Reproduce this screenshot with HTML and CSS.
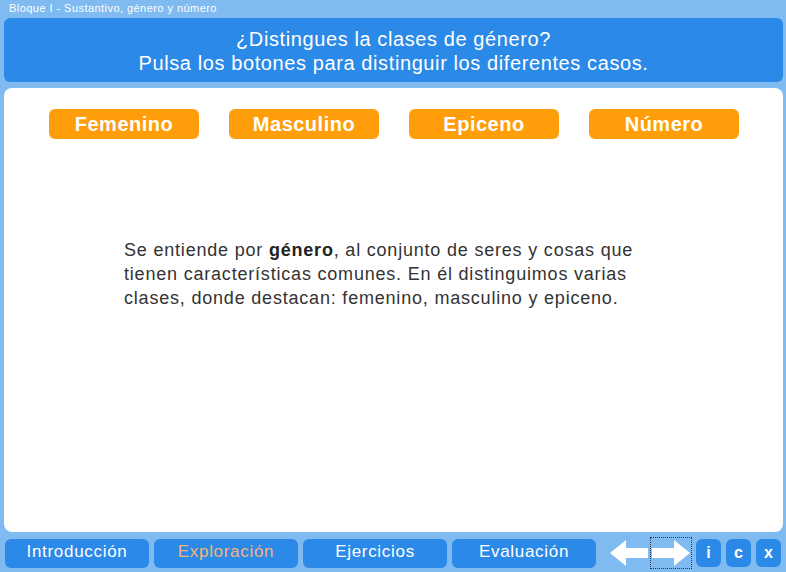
FILE: index.html
```html
<!DOCTYPE html>
<html lang="es">
<head>
<meta charset="utf-8">
<title>Bloque I - Sustantivo, género y número</title>
<link rel="stylesheet" href="styles.css">
</head>
<body>
<div class="app">
  <div class="topbar">Bloque I - Sustantivo, género y número</div>
  <header class="header">
    <p>¿Distingues la clases de género?</p>
    <p>Pulsa los botones para distinguir los diferentes casos.</p>
  </header>
  <main class="panel">
    <div class="choices">
      <button class="choice">Femenino</button>
      <button class="choice">Masculino</button>
      <button class="choice">Epiceno</button>
      <button class="choice">Número</button>
    </div>
    <p class="text">Se entiende por <b>género</b>, al conjunto de seres y cosas que<br>tienen características comunes. En él distinguimos varias<br>clases, donde destacan: femenino, masculino y epiceno.</p>
  </main>
  <nav class="nav">
    <div class="tabs">
      <span class="tab">Introducción</span>
      <span class="tab active">Exploración</span>
      <span class="tab">Ejercicios</span>
      <span class="tab">Evaluación</span>
    </div>
    <div class="arrows">
      <span class="arrow">
        <svg width="40" height="30" viewBox="0 0 40 30"><path d="M1 15 L17 2 L17 10 L39 10 L39 20 L17 20 L17 28 Z" fill="#fff"/></svg>
      </span>
      <span class="arrow focus">
        <svg width="40" height="30" viewBox="0 0 40 30"><path d="M39 15 L23 2 L23 10 L1 10 L1 20 L23 20 L23 28 Z" fill="#fff"/></svg>
      </span>
    </div>
    <div class="minis">
      <span class="mini">i</span>
      <span class="mini">c</span>
      <span class="mini">x</span>
    </div>
  </nav>
</div>
</body>
</html>
```
FILE: styles.css
```css
html, body {
  margin: 0;
  padding: 0;
}
body {
  background: #7fbaf1;
  font-family: "Liberation Sans", Arial, sans-serif;
  width: 786px;
  height: 572px;
  overflow: hidden;
}
.app {
  display: flex;
  flex-direction: column;
  padding: 0 3px 0 4px;
  height: 572px;
  box-sizing: border-box;
}
.topbar {
  height: 18px;
  line-height: 16px;
  font-size: 11px;
  letter-spacing: 0.45px;
  color: #fff;
  padding-left: 5px;
}
.header {
  background: #2b89e7;
  border-radius: 6px;
  height: 64px;
  color: #fff;
  text-align: center;
  font-size: 20px;
  letter-spacing: 0.6px;
  line-height: 24px;
  padding-top: 9px;
  box-sizing: border-box;
}
.header p {
  margin: 0;
}
.panel {
  margin-top: 6px;
  background: #fff;
  border-radius: 8px;
  height: 444px;
  box-sizing: border-box;
  padding-top: 21px;
}
.choices {
  display: flex;
  gap: 30px;
  padding-left: 45px;
}
.choice {
  width: 150px;
  height: 30px;
  border: none;
  border-radius: 6px;
  background: #ff9d0a;
  color: #fff;
  font-family: "Liberation Sans", Arial, sans-serif;
  font-weight: bold;
  font-size: 20px;
  letter-spacing: 0.5px;
  padding: 0;
  line-height: 29px;
}
.text {
  margin: 99px 0 0 120px;
  font-size: 18px;
  letter-spacing: 0.8px;
  line-height: 24px;
  color: #333;
}
.text b {
  color: #222;
}
.nav {
  display: flex;
  align-items: center;
  margin-top: 6px;
  height: 30px;
}
.tabs {
  display: flex;
  gap: 5px;
  padding-left: 1px;
}
.tab {
  width: 144px;
  height: 29px;
  background: #2b89e7;
  border-radius: 6px;
  color: #fff;
  font-size: 17px;
  letter-spacing: 0.7px;
  text-align: center;
  line-height: 26px;
}
.tab.active {
  color: #f7b27a;
}
.arrows {
  display: flex;
  margin-left: 13px;
  gap: 2px;
}
.arrow {
  width: 40px;
  height: 30px;
  display: flex;
  align-items: center;
  justify-content: center;
  box-sizing: border-box;
}
.arrow.focus {
  outline: 1px dotted #334;
  outline-offset: 0;
}
.minis {
  display: flex;
  gap: 5px;
  margin-left: 5px;
}
.mini {
  width: 25px;
  height: 28px;
  background: #2b89e7;
  border-radius: 6px;
  color: #fff;
  font-weight: bold;
  font-size: 16px;
  text-align: center;
  line-height: 27px;
}
```
